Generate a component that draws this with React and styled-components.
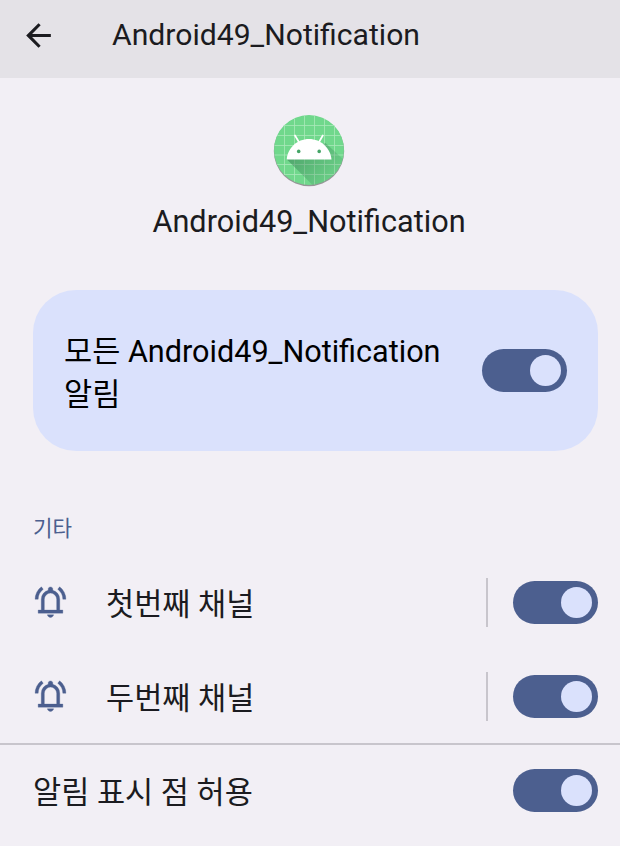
import { useState } from 'react'
import styled, { createGlobalStyle } from 'styled-components'

const GlobalStyle = createGlobalStyle`
  * {
    box-sizing: border-box;
  }
  body {
    margin: 0;
    background: #f2eff5;
    color: #1b1b20;
    font-family: Roboto, 'Noto Sans CJK KR', sans-serif;
  }
`

const Screen = styled.main`
  width: 620px;
  height: 846px;
  overflow: hidden;
  background: #f2eff5;
`

const AppBar = styled.header`
  display: flex;
  align-items: center;
  height: 78px;
  padding: 0 0 8px 20px;
  background: #e4e2e7;
  h1 {
    margin: 0 0 0 55px;
    font-size: 30.15px;
    font-weight: 400;
    line-height: 40px;
  }
`

const BackButton = styled.button`
  display: flex;
  padding: 0;
  border: 0;
  background: none;
  color: #1b1b20;
`

const AppHeader = styled.section`
  display: flex;
  flex-direction: column;
  align-items: center;
  height: 212px;
  padding: 27px 2px 0 0;
  h2 {
    margin: 7px 0 0;
    font-size: 30.65px;
    font-weight: 400;
    line-height: 40px;
  }
`

const MainSwitchCard = styled.section`
  display: flex;
  align-items: center;
  justify-content: space-between;
  height: 161px;
  margin: 0 22px 0 33px;
  padding: 0 31px;
  border-radius: 43px;
  background: #dae1fc;
  color: #000;
  p {
    margin: 0;
    padding-top: 5px;
    font-size: 30.6px;
    line-height: 43px;
  }
`

const Category = styled.h3`
  height: 104px;
  margin: 0;
  padding: 62px 33px 0;
  color: #4c5f8f;
  font-size: 21.2px;
  font-weight: 400;
  line-height: 32px;
`

const Row = styled.div`
  display: flex;
  align-items: center;
  height: ${(props) => (props.$divided ? 93 : 94)}px;
  padding: 0 22px 0 ${(props) => (props.$channel ? 32 : 33)}px;
  border-top: ${(props) => (props.$divided ? '2px solid #c8c5cc' : '0')};
`

const Label = styled.span`
  flex: 1;
  margin-left: ${(props) => (props.$indent ? 37 : 0)}px;
  padding-top: 5px;
  font-size: 30.6px;
  line-height: 44px;
`

const Separator = styled.i`
  width: 2px;
  height: 49px;
  margin-right: 25px;
  background: #c8c5cc;
`

const Track = styled.button`
  display: flex;
  flex: none;
  align-items: center;
  justify-content: ${(props) => (props.$on ? 'flex-end' : 'flex-start')};
  width: 85px;
  height: 43px;
  padding: 0 6px;
  border: 0;
  border-radius: 22px;
  background: ${(props) => (props.$on ? '#4c5f8f' : '#c8c5cc')};
`

const Thumb = styled.span`
  width: 31px;
  height: 31px;
  border-radius: 50%;
  background: #dae1fc;
`

const Toggle = () => {
  const [on, setOn] = useState(true)
  return (
    <Track role='switch' aria-checked={on} $on={on} onClick={() => setOn(!on)}>
      <Thumb />
    </Track>
  )
}

const BackIcon = () => (
  <svg width='37' height='37' viewBox='0 0 24 24' fill='currentColor'>
    <path d='M20 11H7.83l5.59-5.59L12 4l-8 8 8 8 1.41-1.41L7.83 13H20v-2z' />
  </svg>
)

const BellIcon = () => (
  <svg width='37' height='37' viewBox='0 0.1 24 24' fill='#4c5f8f' stroke='#4c5f8f' strokeWidth='.2'>
    <path d='M2 10Q2 7.5 3.1 5.4 4.2 3.3 6.1 1.95L7.3 3.55Q5.8 4.65 4.9 6.3 4 8 4 10Z' />
    <path d='M20 10q0-2-.9-3.7Q18.2 4.65 16.7 3.55L17.9 1.95Q19.8 3.3 20.9 5.4 22 7.5 22 10Z' />
    <path
      fillRule='evenodd'
      d='M4 19V17H6V10Q6 7.9 7.25 6.3 8.5 4.7 10.5 4.2V3.5q0-.6.44-1.06Q11.4 2 12 2t1.06.44Q13.5 2.9 13.5 3.5V4.2Q15.5 4.7 16.75 6.3 18 7.9 18 10V17H20V19ZM8 17H16V10q0-1.65-1.2-2.8Q13.65 6 12 6 10.35 6 9.2 7.2 8 8.35 8 10Z'
    />
    <path d='M12 21.8q-.8 0-1.4-.6Q10 20.6 10 20H14q0 .6-.6 1.2Q12.8 21.8 12 21.8Z' />
  </svg>
)

const AndroidLogo = () => (
  <svg width='90' height='90' viewBox='0 0 90 90'>
    <defs>
      <clipPath id='disc'>
        <circle cx='45' cy='45' r='35' />
      </clipPath>
      <linearGradient id='shade' x1='30' y1='50' x2='62' y2='80' gradientUnits='userSpaceOnUse'>
        <stop offset='0' stopColor='#327a50' stopOpacity='.5' />
        <stop offset='1' stopColor='#327a50' stopOpacity='.1' />
      </linearGradient>
      <filter id='drop' x='-10%' y='-10%' width='120%' height='120%'>
        <feGaussianBlur stdDeviation='.7' />
      </filter>
    </defs>
    <circle cx='45' cy='46' r='35.2' fill='#777' opacity='.75' filter='url(#drop)' />
    <g clipPath='url(#disc)'>
      <path fill='#70d88c' d='M0 0h90v90H0z' />
      <path
        stroke='#a9e8ba'
        strokeWidth='.8'
        d='M20.5 0v90M30.5 0v90M40.5 0v90M50.5 0v90M60.5 0v90M70.5 0v90M0 20.5h90M0 30.5h90M0 40.5h90M0 50h90M0 59.5h90M0 69.5h90'
      />
      <path fill='url(#shade)' d='M22.7 54.2L60 91.5h30V64L61.5 38z' />
    </g>
    <path fill='#fff' d='M22.7 54.5C23.6 43 33 34 45 34s21.4 9 22.5 20.5z' />
    <path stroke='#fff' strokeWidth='1.7' strokeLinecap='round' d='M31 30.5l4.5 7.5M58.8 30.5L54.5 38' />
    <circle cx='34.7' cy='46.4' r='1.8' fill='#45a567' />
    <circle cx='55.2' cy='46.4' r='1.8' fill='#45a567' />
  </svg>
)

const channels = ['첫번째 채널', '두번째 채널']

export default function App() {
  return (
    <Screen lang='ko'>
      <GlobalStyle />
      <AppBar>
        <BackButton aria-label='뒤로'>
          <BackIcon />
        </BackButton>
        <h1>Android49_Notification</h1>
      </AppBar>
      <AppHeader>
        <AndroidLogo />
        <h2>Android49_Notification</h2>
      </AppHeader>
      <MainSwitchCard>
        <p>모든 Android49_Notification<br />알림</p>
        <Toggle />
      </MainSwitchCard>
      <Category>기타</Category>
      {channels.map((name) => (
        <Row key={name} $channel>
          <BellIcon />
          <Label $indent>{name}</Label>
          <Separator />
          <Toggle />
        </Row>
      ))}
      <Row $divided>
        <Label>알림 표시 점 허용</Label>
        <Toggle />
      </Row>
    </Screen>
  )
}
